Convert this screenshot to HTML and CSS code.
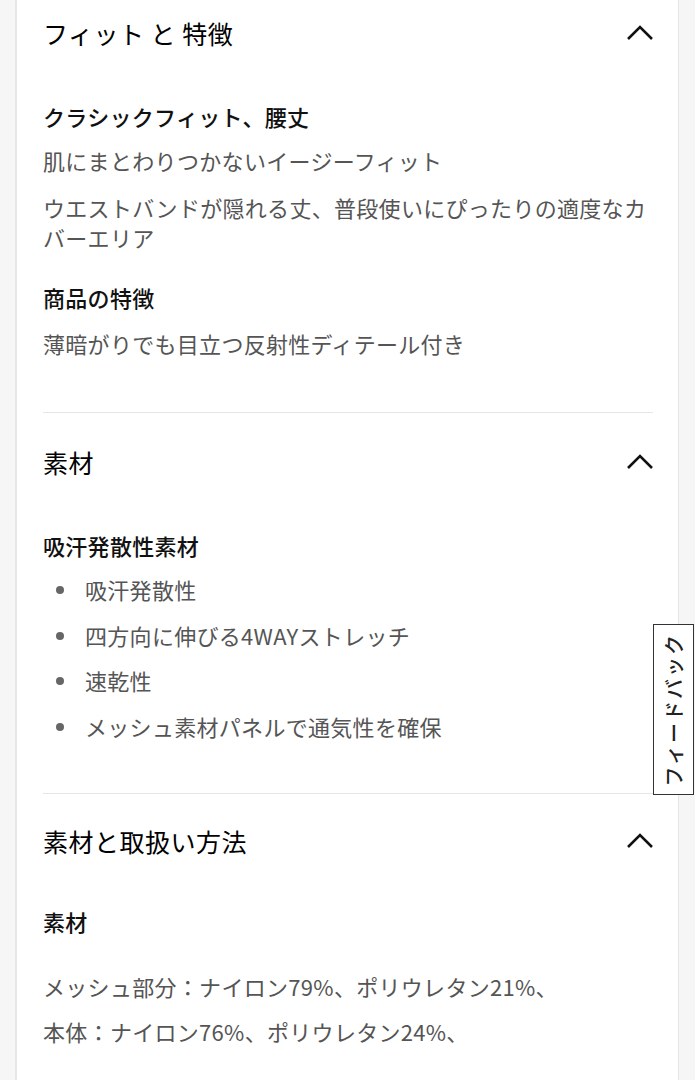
FILE: index.html
```html
<!DOCTYPE html>
<html lang="ja">
<head>
<meta charset="utf-8">
<link rel="stylesheet" href="styles.css">
</head>
<body>
<div class="page">
  <div class="panel">
    <div class="scroll">
      <section class="acc first">
        <div class="acc-head">
          <h2 class="acc-title">フィット と 特徴</h2>
          <svg class="chev" width="28" height="16" viewBox="0 0 28 16"><polyline points="2,14 14,2 26,14" fill="none" stroke="#111" stroke-width="2.6"/></svg>
        </div>
        <div class="acc-body">
          <div class="group">
            <h3 class="sub">クラシックフィット、腰丈</h3>
            <p class="txt">肌にまとわりつかないイージーフィット</p>
            <p class="txt">ウエストバンドが隠れる丈、普段使いにぴったりの適度なカバーエリア</p>
          </div>
          <div class="group">
            <h3 class="sub">商品の特徴</h3>
            <p class="txt">薄暗がりでも目立つ反射性ディテール付き</p>
          </div>
        </div>
      </section>
      <section class="acc">
        <div class="acc-head">
          <h2 class="acc-title">素材</h2>
          <svg class="chev" width="28" height="16" viewBox="0 0 28 16"><polyline points="2,14 14,2 26,14" fill="none" stroke="#111" stroke-width="2.6"/></svg>
        </div>
        <div class="acc-body">
          <div class="group">
            <h3 class="sub">吸汗発散性素材</h3>
            <ul class="list">
              <li>吸汗発散性</li>
              <li>四方向に伸びる4WAYストレッチ</li>
              <li>速乾性</li>
              <li>メッシュ素材パネルで通気性を確保</li>
            </ul>
          </div>
        </div>
      </section>
      <section class="acc last">
        <div class="acc-head">
          <h2 class="acc-title">素材と取扱い方法</h2>
          <svg class="chev" width="28" height="16" viewBox="0 0 28 16"><polyline points="2,14 14,2 26,14" fill="none" stroke="#111" stroke-width="2.6"/></svg>
        </div>
        <div class="acc-body">
          <h3 class="sub sub-gap">素材</h3>
          <p class="txt tight">メッシュ部分：ナイロン79%、ポリウレタン21%、</p>
          <p class="txt tight">本体：ナイロン76%、ポリウレタン24%、</p>
        </div>
      </section>
    </div>
  </div>
  <button class="feedback"><span>フィードバック</span></button>
</div>
</body>
</html>
```

FILE: styles.css
```css
* { box-sizing: border-box; }
html, body { margin: 0; padding: 0; background: #f6f6f6; }
body {
  font-family: "Noto Sans CJK JP", "Noto Sans", sans-serif;
  width: 695px;
  height: 1080px;
  overflow: hidden;
}
.page {
  position: relative;
  height: 1080px;
  padding: 0 16px 0 15px;
}
.panel {
  background: #fff;
  height: 100%;
  border-left: 2px solid #e6e6e6;
  border-right: 1px solid #e6e6e6;
  padding: 0 25px 0 26px;
  overflow: hidden;
}
.scroll { margin-top: -16px; }
.acc { border-bottom: 1px solid #e6e6e6; padding-bottom: 52px; }
.acc.first { padding-bottom: 54px; }
.acc.last { border-bottom: none; }
.acc-head {
  height: 97px;
  display: flex;
  align-items: center;
  justify-content: space-between;
}
.acc.last .acc-head { height: 94px; }
.acc-title {
  margin: 0;
  font-size: 25px;
  font-weight: 400;
  letter-spacing: 0.5px;
  color: #000;
  line-height: 30px;
}
.chev { display: block; margin-right: -1px; }
.acc-body { padding-top: 20px; }
.acc.last .acc-body { padding-top: 18px; }
.group + .group { margin-top: 30px; }
.group + .group .sub { margin-bottom: 16px; }
.sub {
  margin: 0 0 14px;
  font-size: 22px;
  font-weight: 500;
  letter-spacing: 0.3px;
  line-height: 30px;
  color: #111;
}
.txt {
  margin: 0;
  font-size: 22px;
  font-weight: 400;
  letter-spacing: 0.3px;
  line-height: 30px;
  color: #555;
}
.txt + .txt { margin-top: 17px; }
.sub-gap { margin-bottom: 35px; }
.txt.tight + .txt.tight { margin-top: 15px; }
.list { list-style: none; margin: 0; padding: 0; }
.list li {
  position: relative;
  padding-left: 42px;
  font-size: 22px;
  letter-spacing: 0.3px;
  line-height: 30px;
  color: #555;
}
.list li + li { margin-top: 15.5px; }
.list li::before {
  content: "";
  position: absolute;
  left: 13px;
  top: 12px;
  width: 8px;
  height: 8px;
  border-radius: 50%;
  background: #666;
}
.feedback {
  position: absolute;
  left: 653px;
  top: 624px;
  width: 41px;
  height: 171px;
  background: #fff;
  border: 1.5px solid #333;
  padding: 0;
  display: flex;
  align-items: center;
  justify-content: center;
  font-family: "Noto Sans CJK JP", "Noto Sans", sans-serif;
  cursor: pointer;
}
.feedback span {
  writing-mode: vertical-rl;
  text-orientation: sideways;
  transform: rotate(180deg);
  font-size: 20px;
  font-weight: 500;
  letter-spacing: 2px;
  color: #222;
  line-height: 1;
}
```
